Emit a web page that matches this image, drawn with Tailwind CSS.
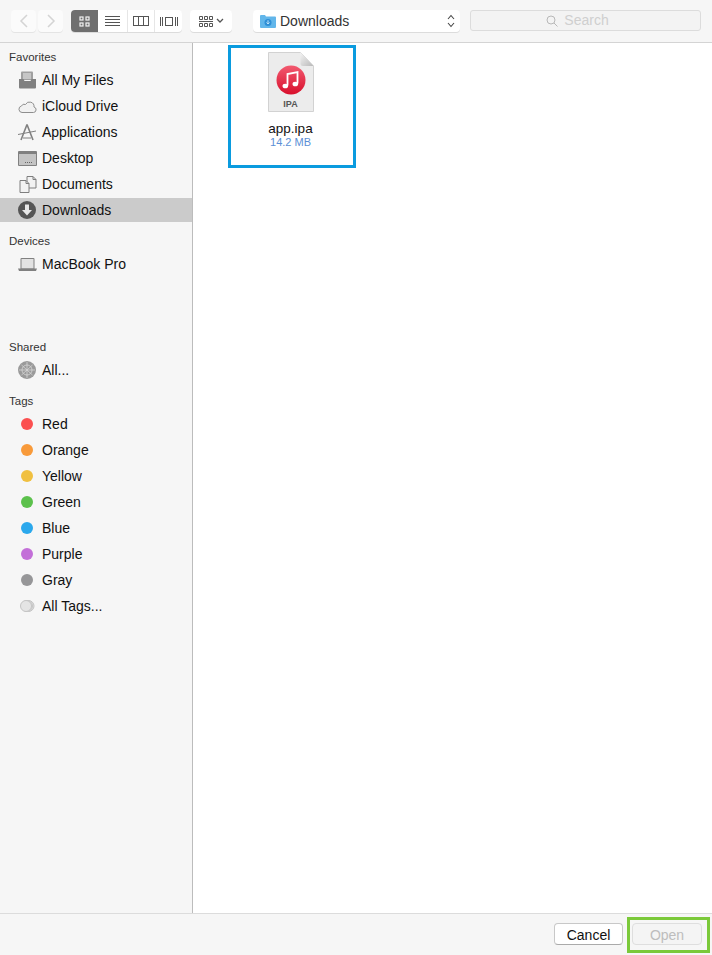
<!doctype html>
<html>
<head>
<meta charset="utf-8">
<script src="https://cdn.jsdelivr.net/npm/@tailwindcss/browser@4"></script>
</head>
<body class="m-0 bg-white">
<div class="w-[712px] h-[955px] flex flex-col overflow-hidden text-[14px] text-[#111] font-['Liberation_Sans',Arial,sans-serif]">
  <!-- toolbar -->
  <header class="h-[43px] shrink-0 bg-[#f6f6f6] border-b border-[#d4d4d4] flex items-start pt-[10px] pl-[11px]">
    <div class="flex gap-[2px]">
      <div class="w-[25px] h-[22px] bg-[#fbfbfb] rounded-[4px] shadow-[0_1px_0_#e4e4e4] flex items-center justify-center">
        <svg width="10" height="14" viewBox="0 0 10 14" fill="none" stroke="#d4d4d4" stroke-width="1.5"><path d="M8 1 2 7l6 6"/></svg>
      </div>
      <div class="w-[25px] h-[22px] bg-[#fbfbfb] rounded-[4px] shadow-[0_1px_0_#e4e4e4] flex items-center justify-center">
        <svg width="10" height="14" viewBox="0 0 10 14" fill="none" stroke="#d4d4d4" stroke-width="1.5"><path d="m2 1 6 6-6 6"/></svg>
      </div>
    </div>
    <div class="ml-[8px] flex h-[22px] w-[111px] rounded-[4px] bg-white shadow-[0_1px_0_#dcdcdc]">
      <div class="w-[27px] bg-[#6f6f6f] rounded-l-[4px] flex items-center justify-center">
        <svg width="11" height="11" viewBox="0 0 11 11" fill="none" stroke="#f2f2f2" stroke-width="1.2"><rect x="1" y="1" width="3" height="3"/><rect x="7" y="1" width="3" height="3"/><rect x="1" y="7" width="3" height="3"/><rect x="7" y="7" width="3" height="3"/></svg>
      </div>
      <div class="w-[30px] border-r border-[#e6e6e6] flex items-center justify-center">
        <svg width="15" height="11" viewBox="0 0 15 11" stroke="#555" stroke-width="1"><path d="M0 .5h15M0 3.500h15M0 6.500h15M0 9.500h15"/></svg>
      </div>
      <div class="w-[27px] border-r border-[#e6e6e6] flex items-center justify-center">
        <svg width="16" height="10" viewBox="0 0 16 10" fill="none" stroke="#555" stroke-width="1"><rect x=".5" y=".5" width="15" height="9"/><path d="M5.500 0v10M10.500 0v10"/></svg>
      </div>
      <div class="flex-1 flex items-center justify-center">
        <svg width="18" height="11" viewBox="0 0 18 11" fill="none" stroke="#555" stroke-width="1"><rect x="5.500" y="1.500" width="7" height="8"/><path d="M.5 1v9M2.500 1v9M15.500 1v9M17.500 1v9"/></svg>
      </div>
    </div>
    <div class="ml-[8px] w-[42px] h-[22px] rounded-[4px] bg-white shadow-[0_1px_0_#dcdcdc] flex items-center pl-[9px] gap-[3px]">
      <svg width="14" height="11" viewBox="0 0 14 11" fill="none" stroke="#555" stroke-width="1"><path d="M.5.5h3v3h-3zM5.500.5h3v3h-3zM10.500.5h3v3h-3z"/><path d="M0 5.500h14"/><path d="M.5 7.500h3v3h-3zM5.500 7.500h3v3h-3zM10.500 7.500h3v3h-3z"/></svg>
      <svg width="8" height="6" viewBox="0 0 8 6" fill="none" stroke="#555" stroke-width="1.300"><path d="m1 1 3 3 3-3"/></svg>
    </div>
    <div class="ml-[21px] w-[207px] h-[22px] rounded-[4px] bg-white shadow-[0_1px_0_#dcdcdc] flex items-center pl-[7px] pr-[5px]">
      <svg width="16" height="14" viewBox="0 0 16 14"><path d="M0 2a1 1 0 0 1 1-1h4l1 1.500h9a1 1 0 0 1 1 1V13a1 1 0 0 1-1 1H1a1 1 0 0 1-1-1z" fill="#62b6ea"/><circle cx="8" cy="8.500" r="3.500" fill="#2f8fd6"/><path d="M8 6.300v3.500M6.500 8.500 8 10l1.500-1.500" fill="none" stroke="#bfe2f8"/></svg>
      <span class="ml-[4px] pt-[1px] text-[#333] text-[14px]">Downloads</span>
      <svg class="ml-auto" width="8" height="14" viewBox="0 0 8 14" fill="none" stroke="#444" stroke-width="1.100"><path d="m1 5 3-3.500L7 5M1 9l3 3.500L7 9"/></svg>
    </div>
    <div class="ml-[10px] w-[231px] h-[21px] rounded-[3px] bg-[#f3f3f3] border border-[#dcdcdc] flex items-center justify-center gap-[6px] pr-[16px] text-[14px] text-[#cfcfcf]">
      <svg width="12" height="12" viewBox="0 0 12 12" fill="none" stroke="#b8b8b8" stroke-width="1"><circle cx="5" cy="5" r="4"/><path d="m8 8 3.500 3.500"/></svg>
      <span>Search</span>
    </div>
  </header>

  <div class="flex flex-1 min-h-0">
    <!-- sidebar -->
    <aside class="w-[193px] shrink-0 bg-[#f6f6f6] border-r border-[#bcbcbc] pt-[6px]">
      <div class="h-4 pl-[9px] text-[11.500px] leading-4 text-[#333]">Favorites</div>
      <ul class="mt-[3px] flex flex-col gap-[2px]">
        <li class="h-6 flex items-center pl-[18px] gap-[5px]">
          <svg width="19" height="18" viewBox="0 0 19 18"><path d="M3 9V1.500a1 1 0 0 1 1-1h10a1 1 0 0 1 1 1V9z" fill="#a0a0a0"/><path d="M5 3h8M5 5h8M5 7h8" stroke="#ececec"/><path d="M1 8h4.500l1 2h6l1-2H18v8.500a1 1 0 0 1-1 1H2a1 1 0 0 1-1-1z" fill="#808080"/></svg>
          <span class="pt-[1px]">All My Files</span>
        </li>
        <li class="h-6 flex items-center pl-[18px] gap-[5px]">
          <svg width="19" height="13" viewBox="0 0 19 13" fill="#f1f1f1" stroke="#8e8e8e"><path d="M4 12.500a3.300 3.300 0 0 1-.5-6.500 3 3 0 0 1 4-1.500 4.500 4.500 0 0 1 8.500 2.500 2.800 2.800 0 0 1-.5 5.500z"/></svg>
          <span class="pt-[1px]">iCloud Drive</span>
        </li>
        <li class="h-6 flex items-center pl-[17px] gap-[5px]">
          <svg width="20" height="19" viewBox="0 0 20 19" fill="none" stroke="#808080" stroke-width="1.600"><path d="M10 1.500 4 17M10 1.500 16 17"/><path d="M1 11.500 19 8M6 15h8" stroke-width="1"/></svg>
          <span class="pt-[1px]">Applications</span>
        </li>
        <li class="h-6 flex items-center pl-[18px] gap-[5px]">
          <svg width="19" height="15" viewBox="0 0 19 15"><rect width="19" height="15" rx="1" fill="#808080"/><rect x="1" y="3" width="17" height="11" fill="#c4c4c4"/><path d="M9 11.500h1M11 11.500h1M13 11.500h1M7 11.500h1" stroke="#666"/></svg>
          <span class="pt-[1px]">Desktop</span>
        </li>
        <li class="h-6 flex items-center pl-[19px] gap-[5px]">
          <svg width="18" height="18" viewBox="0 0 18 18" fill="#f2f2f2" stroke="#7e7e7e"><path d="M8 1.500h6l3 3V13H8z"/><path d="M14 1.500v3h3" fill="none"/><path d="M1 5.500h6l3 3v9H1z"/><path d="M7 5.500v3h3" fill="none"/></svg>
          <span class="pt-[1px]">Documents</span>
        </li>
        <li class="h-6 flex items-center pl-[18px] gap-[5px] bg-[#cbcbcb]">
          <svg width="18" height="18" viewBox="0 0 18 18"><circle cx="9" cy="9" r="9" fill="#555"/><path d="M7 3.500h4V9h3l-5 5.500L4 9h3z" fill="#e8e8e8"/></svg>
          <span class="ml-[1px] pt-[1px]">Downloads</span>
        </li>
      </ul>

      <div class="mt-[11px] h-4 pl-[9px] text-[11.500px] leading-4 text-[#333]">Devices</div>
      <ul class="mt-[3px]">
        <li class="h-6 flex items-center pl-[18px] gap-[5px]">
          <svg width="19" height="13" viewBox="0 0 19 13"><path d="M2.500 1a1 1 0 0 1 1-1h12a1 1 0 0 1 1 1v10h-14z" fill="#808080"/><rect x="3.500" y="1" width="12" height="9.500" fill="#e2e2e2"/><path d="M0 10.500h19l-1 2.500H1z" fill="#808080"/></svg>
          <span class="pt-[1px]">MacBook Pro</span>
        </li>
      </ul>

      <div class="mt-[63px] h-4 pl-[9px] text-[11.500px] leading-4 text-[#333]">Shared</div>
      <ul class="mt-[3px]">
        <li class="h-6 flex items-center pl-[18px] gap-[5px]">
          <svg width="18" height="18" viewBox="0 0 18 18" fill="none"><circle cx="9" cy="9" r="9" fill="#9a9a9a"/><path d="M9 1v16M1 9h16M3.500 4 14.500 14M14.500 4 3.500 14" stroke="#d5d5d5" stroke-width=".8"/><circle cx="9" cy="9" r="5" stroke="#d5d5d5" stroke-width=".8"/></svg>
          <span class="ml-[1px] pt-[1px]">All...</span>
        </li>
      </ul>

      <div class="mt-[11px] h-4 pl-[9px] text-[11.500px] leading-4 text-[#333]">Tags</div>
      <ul class="mt-[3px] flex flex-col gap-[2px]">
        <li class="h-6 flex items-center pl-[21px] gap-[9px]"><span class="w-3 h-3 rounded-full bg-[#fb5050]"></span><span class="pt-[1px]">Red</span></li>
        <li class="h-6 flex items-center pl-[21px] gap-[9px]"><span class="w-3 h-3 rounded-full bg-[#f89a3a]"></span><span class="pt-[1px]">Orange</span></li>
        <li class="h-6 flex items-center pl-[21px] gap-[9px]"><span class="w-3 h-3 rounded-full bg-[#f0c040]"></span><span class="pt-[1px]">Yellow</span></li>
        <li class="h-6 flex items-center pl-[21px] gap-[9px]"><span class="w-3 h-3 rounded-full bg-[#5cc14c]"></span><span class="pt-[1px]">Green</span></li>
        <li class="h-6 flex items-center pl-[21px] gap-[9px]"><span class="w-3 h-3 rounded-full bg-[#2ba8ec]"></span><span class="pt-[1px]">Blue</span></li>
        <li class="h-6 flex items-center pl-[21px] gap-[9px]"><span class="w-3 h-3 rounded-full bg-[#c36fd8]"></span><span class="pt-[1px]">Purple</span></li>
        <li class="h-6 flex items-center pl-[21px] gap-[9px]"><span class="w-3 h-3 rounded-full bg-[#969698]"></span><span class="pt-[1px]">Gray</span></li>
        <li class="h-6 flex items-center pl-[20px] gap-[7px]">
          <svg width="15" height="12" viewBox="0 0 15 12" fill="#e4e4e4" stroke="#c4c4c4"><circle cx="8.500" cy="6" r="5.500"/><circle cx="7" cy="6" r="5.500"/><circle cx="6" cy="6" r="5.500"/></svg>
          <span class="pt-[1px]">All Tags...</span>
        </li>
      </ul>
    </aside>

    <!-- file area -->
    <main class="flex-1 bg-white pl-[35px] pt-[2px]">
      <div class="w-[128px] h-[123px] border-[3px] border-[#0a9bdf] flex flex-col items-center pt-[4px] pr-[3px]">
        <svg width="46" height="60" viewBox="0 0 46 60">
          <defs>
            <linearGradient id="disc" x1="0" y1="0" x2="0" y2="1"><stop offset="0" stop-color="#f25a70"/><stop offset="1" stop-color="#d80f2c"/></linearGradient>
            <linearGradient id="fold" x1="0" y1="0" x2="1" y2="1"><stop offset="0" stop-color="#f4f4f4"/><stop offset="1" stop-color="#b8b8b8"/></linearGradient>
          </defs>
          <path d="M.5.5h32L45.500 14v45.500H.5z" fill="#ececec" stroke="#d2d2d2"/>
          <path d="M32.500.5 45.500 14H35a2.500 2.500 0 0 1-2.500-2.500z" fill="url(#fold)"/>
          <circle cx="23" cy="28" r="14.500" fill="url(#disc)"/>
          <path d="M19.500 33.500V22l10-2v11.500" fill="none" stroke="#fff" stroke-width="1.800"/>
          <ellipse cx="17.300" cy="34" rx="2.800" ry="2.300" fill="#fff"/>
          <ellipse cx="27.300" cy="32" rx="2.800" ry="2.300" fill="#fff"/>
        </svg>
        <div class="relative -mt-[13px] text-[9px] leading-[10px] font-bold text-[#555]">IPA</div>
        <div class="mt-[13px] text-[13.500px] leading-[14px] text-[#111]">app.ipa</div>
        <div class="text-[11px] leading-[12px] text-[#5b8fd6]">14.2 MB</div>
      </div>
    </main>
  </div>

  <!-- footer -->
  <footer class="h-[42px] shrink-0 bg-[#f6f6f6] border-t border-[#dcdcdc] flex items-start pt-[3px] pl-[554px]">
    <button class="mt-[6px] w-[69px] h-[22px] pt-[1px] rounded-[4px] bg-white border border-[#c8c8c8] border-b-[#aaa] text-[14px] text-[#111]">Cancel</button>
    <div class="ml-[4px] w-[83px] h-[36px] border-[3px] border-[#7bc93a] pl-[2px] pt-[3px]">
      <button class="w-[70px] h-[22px] pt-[1px] rounded-[4px] bg-[#f4f4f4] border border-[#dedede] text-[14px] text-[#bdbdbd]">Open</button>
    </div>
  </footer>
</div>
</body>
</html>
